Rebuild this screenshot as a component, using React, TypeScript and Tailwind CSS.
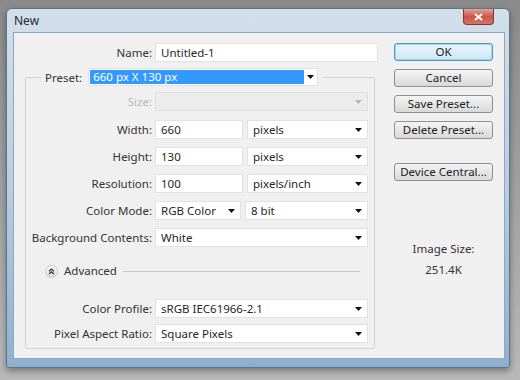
import React from 'react';

const FONT = "font-['Noto_Sans','Open_Sans',sans-serif]";

function Arrow({ muted = false }: { muted?: boolean }) {
  return (
    <svg width="7" height="4" viewBox="0 0 7 4" className="shrink-0">
      <path d="M0 0H7L3.5 4Z" fill={muted ? '#b4b4b4' : '#111'} />
    </svg>
  );
}

function Field({ value, w, select, disabled }: { value?: string; w: string; select?: boolean; disabled?: boolean }) {
  return (
    <div
      className={`${w} h-[19px] flex items-center pl-[5px] pr-[5px] border ${
        disabled ? 'bg-[#ececec] border-[#dedede]' : 'bg-white border-[#e2e2e2]'
      } text-[#262626]`}
    >
      <span className="flex-1 whitespace-nowrap leading-[17px]">{value}</span>
      {select && <Arrow muted={disabled} />}
    </div>
  );
}

function Row({ label, children, muted, className = '' }: { label: string; children: React.ReactNode; muted?: boolean; className?: string }) {
  return (
    <div className={`flex items-center ${className}`}>
      <div
        className={`w-[129px] shrink-0 pr-[3px] flex justify-end whitespace-nowrap leading-[17px] ${
          muted ? 'text-[#b8b8b8]' : 'text-[#333]'
        }`}
      >
        <span>{label}</span>
      </div>
      <div className="flex items-center gap-[4px]">{children}</div>
    </div>
  );
}

function Btn({ label, primary, className = '' }: { label: string; primary?: boolean; className?: string }) {
  return (
    <div
      className={`w-[99px] h-[18px] flex items-center justify-center rounded-[3px] border leading-[16px] text-[#222] ${
        primary
          ? 'border-[#4c9ac4] bg-gradient-to-b from-[#eaf6fd] to-[#cfe7f5] shadow-[inset_0_0_0_1px_#9fd3ee]'
          : 'border-[#8f8f8f] bg-gradient-to-b from-[#f4f4f4] to-[#d9d9d9]'
      } ${className}`}
    >
      {label}
    </div>
  );
}

export default function App() {
  return (
    <div className={`w-[520px] h-[380px] bg-gradient-to-b from-[#8a8a8a] to-[#b8b8b8] pt-[8px] pl-[6px] ${FONT} text-[11.5px]`}>
      {/* window */}
      <div className="w-[504px] h-[360px] rounded-t-[6px] rounded-b-[3px] border border-[#5b7591] bg-gradient-to-b from-[#d3dfeb] via-[#b9cde0] to-[#8eb0cf] shadow-[0_3px_6px_rgba(0,0,0,0.35)] flex flex-col">
        {/* title bar */}
        <div className="h-[23px] flex items-start">
          <div className="ml-[7px] mt-[5px] text-[12px] leading-[14px] text-[#2a2a2a]">New</div>
          <div className="ml-auto mr-[15px] w-[31px] h-[16px] rounded-b-[4px] border border-t-0 border-[#7a3a3a] bg-gradient-to-b from-[#e4a295] via-[#c9564a] to-[#d77262] flex items-center justify-center">
            <svg width="9" height="8" viewBox="0 0 9 8">
              <path d="M1 1L8 7M8 1L1 7" stroke="#fff" strokeWidth="2" />
            </svg>
          </div>
        </div>

        {/* content */}
        <div className="ml-[6px] mr-[4px] h-[327px] bg-[#f0f0f0] border border-[#8ea6bf] flex">
          {/* left column */}
          <div className="ml-[11px] mt-[10px] w-[353px] flex flex-col">
            <Row label="Name:" className="ml-[1px]">
              <Field value="Untitled-1" w="w-[223px]" />
            </Row>

            <fieldset className="mt-[6px] w-[350px] h-[281px] border border-[#d2d2d2] rounded-[2px]">
              <legend className="ml-[15px] pl-[4px] pr-[5px] flex items-center">
                <span className="text-[#333] leading-[17px]">Preset:</span>
                <div className="ml-[6px] w-[230px] h-[18px] bg-white border border-[#e2e2e2] flex items-center p-[1px]">
                  <div className="w-[214px] h-full bg-[#3399ff] text-white pl-[3px] flex items-center leading-[14px] whitespace-nowrap">660 px X 130 px</div>
                  <div className="flex-1 flex justify-center">
                    <Arrow />
                  </div>
                </div>
              </legend>

              <div className="flex flex-col">
                <Row label="Size:" muted className="mt-[6px]">
                  <Field w="w-[213px]" select disabled />
                </Row>
                <Row label="Width:" className="mt-[9px]">
                  <Field value="660" w="w-[88px]" />
                  <Field value="pixels" w="w-[121px]" select />
                </Row>
                <Row label="Height:" className="mt-[8px]">
                  <Field value="130" w="w-[88px]" />
                  <Field value="pixels" w="w-[121px]" select />
                </Row>
                <Row label="Resolution:" className="mt-[8px]">
                  <Field value="100" w="w-[88px]" />
                  <Field value="pixels/inch" w="w-[121px]" select />
                </Row>
                <Row label="Color Mode:" className="mt-[8px]">
                  <Field value="RGB Color" w="w-[86px]" select />
                  <Field value="8 bit" w="w-[123px]" select />
                </Row>
                <Row label="Background Contents:" className="mt-[8px]">
                  <Field value="White" w="w-[213px]" select />
                </Row>

                {/* advanced */}
                <div className="mt-[17px] ml-[19px] mr-[14px] flex items-center h-[14px]">
                  <div className="w-[13px] h-[13px] rounded-full border border-[#c9c9c9] bg-gradient-to-b from-[#fafafa] to-[#dcdcdc] flex items-center justify-center">
                    <svg width="7" height="7" viewBox="0 0 7 7">
                      <path d="M1 3.2L3.5 1L6 3.2M1 6L3.5 3.8L6 6" stroke="#333" strokeWidth="1.2" fill="none" />
                    </svg>
                  </div>
                  <span className="ml-[6px] text-[#333] leading-[14px]">Advanced</span>
                  <div className="ml-[6px] flex-1 h-px bg-[#c8c8c8]" />
                </div>

                <Row label="Color Profile:" className="mt-[21px]">
                  <Field value="sRGB IEC61966-2.1" w="w-[213px]" select />
                </Row>
                <Row label="Pixel Aspect Ratio:" className="mt-[6px]">
                  <Field value="Square Pixels" w="w-[213px]" select />
                </Row>
              </div>
            </fieldset>
          </div>

          {/* right column */}
          <div className="ml-[16px] mt-[10px] w-[99px] flex flex-col">
            <Btn label="OK" primary />
            <Btn label="Cancel" className="mt-[8px]" />
            <Btn label="Save Preset..." className="mt-[8px]" />
            <Btn label="Delete Preset..." className="mt-[8px]" />
            <Btn label="Device Central..." className="mt-[24px]" />
            <div className="mt-[61px] text-center text-[#333] leading-[14px]">Image Size:</div>
            <div className="mt-[7px] text-center text-[#333] leading-[14px]">251.4K</div>
          </div>
        </div>
      </div>
    </div>
  );
}
